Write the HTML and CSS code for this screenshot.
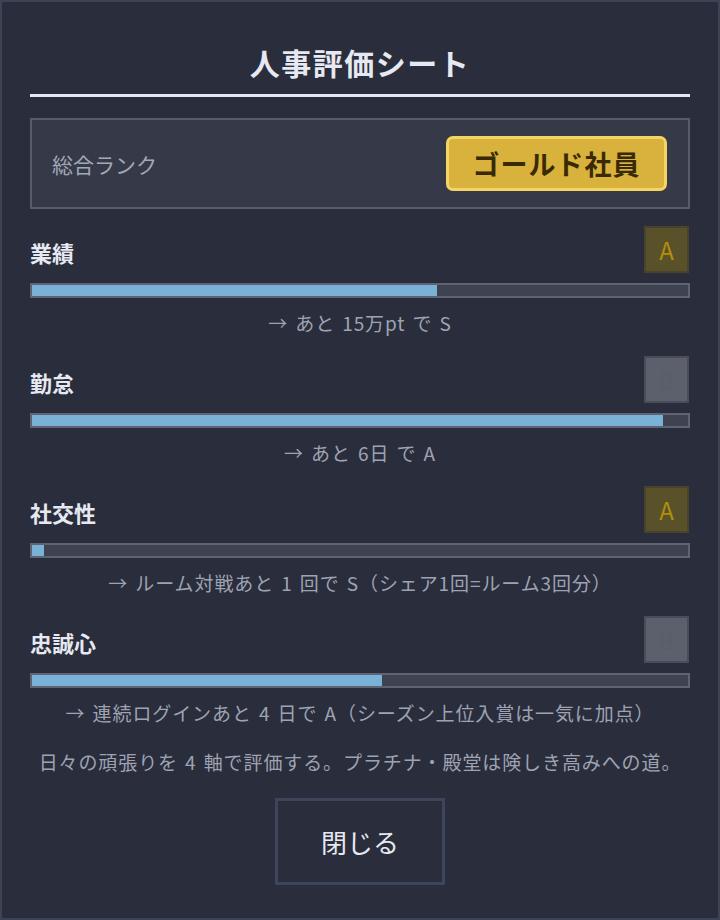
FILE: index.html
```html
<!DOCTYPE html>
<html lang="ja">
<head>
    <meta charset="UTF-8">
    <meta name="viewport" content="width=device-width, initial-scale=1.0">
    <title>人事評価シート</title>
    <link rel="stylesheet" href="styles.css">
</head>
<body>
    <div class="sheet">
        <h1 class="title">人事評価シート</h1>

        <div class="rank-box">
            <span class="rank-label">総合ランク</span>
            <span class="rank-badge">ゴールド社員</span>
        </div>

        <div class="stat">
            <div class="stat-head">
                <span class="stat-label">業績</span>
                <span class="grade grade-a">A</span>
            </div>
            <div class="bar"><div class="bar-fill" style="width: 61.8%;"></div></div>
            <p class="hint">→ あと 15万pt で S</p>
        </div>

        <div class="stat">
            <div class="stat-head">
                <span class="stat-label">勤怠</span>
                <span class="grade grade-b">B</span>
            </div>
            <div class="bar"><div class="bar-fill" style="width: 96.2%;"></div></div>
            <p class="hint">→ あと 6日 で A</p>
        </div>

        <div class="stat">
            <div class="stat-head">
                <span class="stat-label">社交性</span>
                <span class="grade grade-a">A</span>
            </div>
            <div class="bar"><div class="bar-fill" style="width: 1.8%;"></div></div>
            <p class="hint">→ ルーム対戦あと 1 回で S（シェア1回=ルーム3回分）</p>
        </div>

        <div class="stat">
            <div class="stat-head">
                <span class="stat-label">忠誠心</span>
                <span class="grade grade-b">B</span>
            </div>
            <div class="bar"><div class="bar-fill" style="width: 53.4%;"></div></div>
            <p class="hint">→ 連続ログインあと 4 日で A（シーズン上位入賞は一気に加点）</p>
        </div>

        <p class="note">日々の頑張りを 4 軸で評価する。プラチナ・殿堂は険しき高みへの道。</p>

        <button class="close-button">閉じる</button>
    </div>
</body>
</html>
```

FILE: styles.css
```css
:root {
    --bg: #2a2d3b;
    --frame: #3b4357;
    --text: #e6e9f1;
    --muted: #9ea3b3;
    --bar-border: #5f6475;
    --bar-bg: #3f4250;
    --bar-fill: #7ab1d7;
}

* {
    box-sizing: border-box;
}

body {
    margin: 0;
    padding: 0;
    background: var(--bg);
    font-family: 'Noto Sans CJK JP', 'Noto Sans', sans-serif;
    color: var(--text);
}

.sheet {
    width: 720px;
    height: 920px;
    border: 2px solid var(--frame);
    padding: 0 28px;
}

.title {
    margin: 0;
    padding-top: 42px;
    padding-bottom: 14px;
    font-size: 30px;
    line-height: 36px;
    font-weight: bold;
    text-align: center;
    letter-spacing: 1.5px;
    border-bottom: 3px solid var(--text);
}

.rank-box {
    margin-top: 21px;
    height: 91px;
    border: 2px solid #575c6b;
    background: #363a48;
    padding: 0 21px 0 20px;
    display: flex;
    align-items: center;
    justify-content: space-between;
}

.rank-label {
    color: #a3a8b8;
    font-size: 21px;
}

.rank-badge {
    height: 55px;
    width: 221px;
    display: flex;
    align-items: center;
    justify-content: center;
    background: #d8b23c;
    border: 3px solid #f3d465;
    border-radius: 7px;
    color: #3a2a04;
    font-size: 27px;
    font-weight: bold;
    letter-spacing: 1px;
}

.stat {
    margin-top: 17px;
}

.stat + .stat {
    margin-top: 20px;
}

.stat-head {
    display: flex;
    align-items: center;
    justify-content: space-between;
    height: 47px;
}

.stat-label {
    font-size: 22px;
    font-weight: bold;
    padding-top: 5px;
}

.grade {
    width: 45px;
    height: 47px;
    display: flex;
    align-items: center;
    justify-content: center;
    font-size: 24px;
    border: 2px solid;
    margin-right: 1px;
}

.grade-a {
    background: #595129;
    border-color: #48432a;
    color: #b38c0e;
}

.grade-b {
    background: #5c606d;
    border-color: #4a4d59;
    color: #595e6b;
}

.bar {
    margin-top: 10px;
    height: 15px;
    border: 2px solid var(--bar-border);
    background: var(--bar-bg);
}

.bar-fill {
    height: 100%;
    background: var(--bar-fill);
}

.hint,
.note {
    line-height: 26px;
    font-size: 19px;
    color: var(--muted);
    text-align: center;
    letter-spacing: 0.9px;
    word-spacing: 2px;
    white-space: nowrap;
}

.hint {
    margin: 12px 0 0;
}

.note {
    margin: 23px 0 0;
}

.close-button {
    display: block;
    margin: 23px auto 0;
    width: 170px;
    height: 87px;
    background: transparent;
    border: 3px solid #3c4559;
    color: var(--text);
    font-family: inherit;
    font-size: 26px;
    cursor: pointer;
}

.close-button:hover {
    background: #323646;
}
```
